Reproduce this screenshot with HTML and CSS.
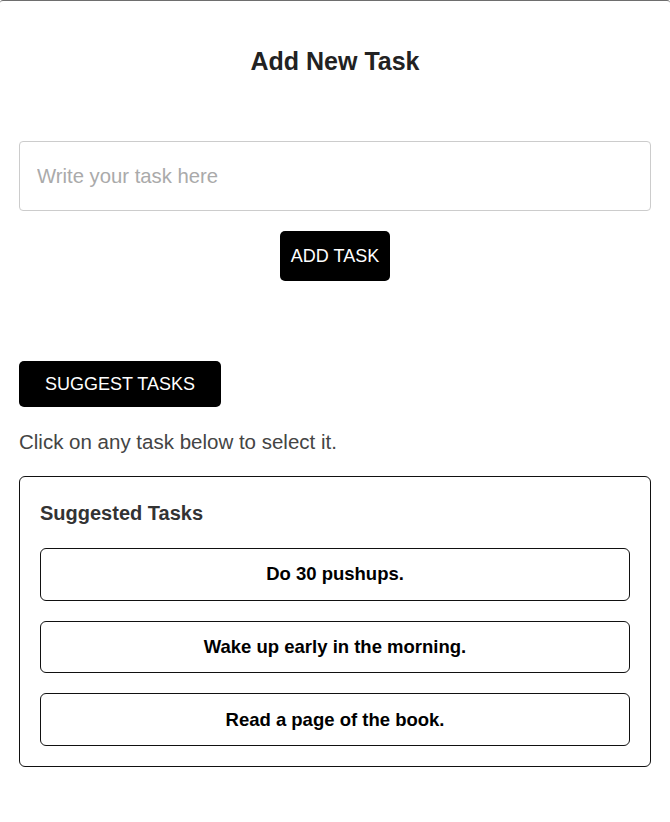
FILE: index.html
```html
<!DOCTYPE html>
<html>
<head>
<meta charset="utf-8">
<link rel="stylesheet" href="styles.css">
</head>
<body>
<div class="page">
  <h1 class="title">Add New Task</h1>
  <input class="task-input" type="text" placeholder="Write your task here">
  <div class="add-row"><button class="btn btn-add">ADD TASK</button></div>
  <button class="btn btn-suggest">SUGGEST TASKS</button>
  <p class="hint">Click on any task below to select it.</p>
  <div class="suggest-box">
    <h2 class="suggest-title">Suggested Tasks</h2>
    <div class="suggest-list">
      <div class="suggest-item">Do 30 pushups.</div>
      <div class="suggest-item">Wake up early in the morning.</div>
      <div class="suggest-item">Read a page of the book.</div>
    </div>
  </div>
</div>
</body>
</html>
```
FILE: styles.css
```css
html, body {
  margin: 0;
  padding: 0;
  background: #fff;
}
body {
  font-family: "Liberation Sans", Arial, sans-serif;
}
.page {
  border-top: 1px solid #6e6e6e;
  border-radius: 3px 3px 0 0;
  padding: 0 19px 40px;
}
.title {
  margin: 0;
  padding-top: 46px;
  font-size: 25px;
  line-height: 28px;
  font-weight: bold;
  color: #222;
  text-align: center;
}
.task-input {
  display: block;
  box-sizing: border-box;
  width: 100%;
  height: 70px;
  margin-top: 66px;
  padding: 0 17px;
  border: 1px solid #ccc;
  border-radius: 4px;
  font-family: inherit;
  font-size: 20.3px;
  color: #222;
  outline: none;
}
.task-input::placeholder {
  color: #aaa;
}
.add-row {
  display: flex;
  justify-content: center;
  margin-top: 20px;
}
.btn {
  display: block;
  background: #000;
  color: #fff;
  border: none;
  border-radius: 5px;
  font-family: inherit;
  font-size: 18px;
  cursor: pointer;
}
.btn-add {
  width: 110px;
  height: 50px;
  padding: 0;
}
.btn-suggest {
  width: 202px;
  height: 46px;
  padding: 0;
  margin-top: 80px;
}
.hint {
  margin: 23px 0 0;
  font-size: 20.5px;
  line-height: 24px;
  color: #444;
}
.suggest-box {
  margin-top: 22px;
  border: 1px solid #111;
  border-radius: 6px;
  padding: 24px 20px 20px;
}
.suggest-title {
  margin: 0;
  font-size: 20px;
  line-height: 24px;
  font-weight: bold;
  color: #333;
}
.suggest-list {
  display: flex;
  flex-direction: column;
  gap: 20px;
  margin-top: 23px;
}
.suggest-item {
  box-sizing: border-box;
  height: 52.7px;
  display: flex;
  align-items: center;
  justify-content: center;
  border: 1px solid #111;
  border-radius: 6px;
  font-size: 18.5px;
  font-weight: bold;
  color: #000;
}
```
